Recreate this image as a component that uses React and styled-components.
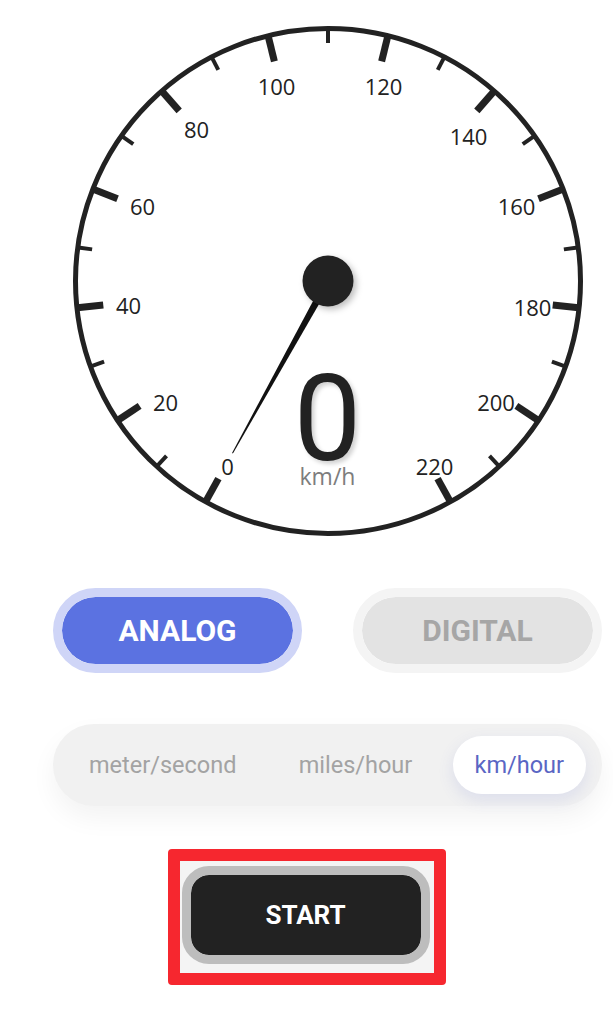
import React, { useState } from 'react';
import styled, { createGlobalStyle } from 'styled-components';

const GlobalStyle = createGlobalStyle`
  html, body {
    margin: 0;
    padding: 0;
    background: #ffffff;
  }
  body {
    width: 613px;
    font-family: Roboto, "Liberation Sans", sans-serif;
  }
`;

const Page = styled.div`
  width: 613px;
  min-height: 1024px;
  box-sizing: border-box;
  padding-top: 26px;
  display: flex;
  flex-direction: column;
  align-items: center;
`;

const Panel = styled.div`
  align-self: flex-start;
  margin-left: 53px;
  width: 549px;
  display: flex;
  flex-direction: column;
  align-items: center;
`;

const Gauge = styled.div`
  position: relative;
  width: 510px;
  height: 510px;
`;

const Dial = styled.svg`
  display: block;
  width: 510px;
  height: 510px;
`;

const Readout = styled.div`
  position: absolute;
  left: 0;
  right: 0;
  top: 343px;
  display: flex;
  flex-direction: column;
  align-items: center;
  pointer-events: none;
`;

const SpeedValue = styled.div`
  font-family: Roboto, "Liberation Sans", sans-serif;
  font-size: 120px;
  line-height: 100px;
  font-weight: 400;
  color: #222222;
  text-shadow: 3px 3px 4px rgba(0, 0, 0, 0.18);
`;

const SpeedUnit = styled.div`
  margin-top: -1px;
  font-family: "Open Sans", "Noto Sans", sans-serif;
  font-size: 23px;
  line-height: 16px;
  color: #7d7d7d;
`;

const ModeRow = styled.div`
  margin-top: 52px;
  width: 100%;
  display: flex;
  justify-content: space-between;
`;

const ModeButton = styled.button`
  width: 249px;
  height: 85px;
  box-sizing: border-box;
  border-radius: 999px;
  border: 9px solid ${(p) => (p.$active ? '#cfd5f7' : '#f4f4f4')};
  background: ${(p) => (p.$active ? '#5b72e1' : '#e3e3e3')};
  background-clip: padding-box;
  color: ${(p) => (p.$active ? '#ffffff' : '#a6a6a6')};
  font-family: Roboto, "Liberation Sans", sans-serif;
  font-weight: 700;
  font-size: 30px;
  padding: 0;
  cursor: pointer;
`;

const UnitBar = styled.div`
  margin-top: 51px;
  width: 100%;
  height: 82px;
  box-sizing: border-box;
  padding: 12px 16px 12px 14px;
  border-radius: 999px;
  background: #f1f1f1;
  box-shadow: 0 12px 26px rgba(0, 0, 0, 0.05);
  display: flex;
  justify-content: space-between;
  align-items: center;
`;

const UnitOption = styled.button`
  height: 58px;
  padding: 0 22px;
  border: none;
  border-radius: 999px;
  background: ${(p) => (p.$active ? '#ffffff' : 'transparent')};
  box-shadow: ${(p) => (p.$active ? '0 6px 16px rgba(80, 95, 200, 0.13)' : 'none')};
  color: ${(p) => (p.$active ? '#5a66c4' : '#a3a3a3')};
  font-family: Roboto, "Liberation Sans", sans-serif;
  font-size: 23.5px;
  font-weight: 400;
  cursor: pointer;
`;

const StartFrame = styled.div`
  margin-top: 43px;
  border: 12px solid #f6272f;
  border-radius: 4px;
  padding: 5px 4px 9px 2px;
  background: #f4f4f4;
  display: flex;
`;

const StartButton = styled.button`
  width: 248px;
  height: 98px;
  box-sizing: border-box;
  border: 9px solid #bdbdbd;
  border-radius: 27px;
  background: #222222;
  background-clip: padding-box;
  color: #ffffff;
  font-family: Roboto, "Liberation Sans", sans-serif;
  font-weight: 700;
  font-size: 26px;
  padding: 0;
  cursor: pointer;
`;

const CX = 255;
const CY = 255;
const START = 29;
const SPAN = 302;
const MAX = 220;

// label centres on the dial face, in dial coordinates
const LABELS = [
  { v: 0, x: 154.5, y: 440 },
  { v: 20, x: 92.5, y: 376 },
  { v: 40, x: 55.5, y: 279 },
  { v: 60, x: 69.5, y: 180 },
  { v: 80, x: 123.5, y: 103 },
  { v: 100, x: 203.5, y: 60 },
  { v: 120, x: 310.5, y: 60 },
  { v: 140, x: 395.5, y: 110 },
  { v: 160, x: 443.5, y: 180 },
  { v: 180, x: 459.5, y: 281 },
  { v: 200, x: 423, y: 376 },
  { v: 220, x: 361.5, y: 440 },
];

const angleFor = (v) => START + (v * SPAN) / MAX;

function Speedometer({ speed }) {
  const ticks = [];
  for (let v = 0; v <= MAX; v += 10) {
    const a = angleFor(v);
    const major = v % 20 === 0;
    const w = major ? 7 : 4;
    const inner = major ? 226 : 238;
    ticks.push(
      <rect
        key={`t${v}`}
        x={-w / 2}
        y={inner}
        width={w}
        height={252 - inner}
        fill="#222"
        transform={`translate(${CX} ${CY}) rotate(${a})`}
      />
    );
  }
  return (
    <Gauge>
      <Dial viewBox="0 0 510 510">
        <defs>
          <filter id="hubShadow" x="-50%" y="-50%" width="200%" height="200%">
            <feDropShadow dx="3" dy="3" stdDeviation="3" floodColor="#000" floodOpacity="0.25" />
          </filter>
        </defs>
        <circle cx={CX} cy={CY} r="252.5" fill="#fff" stroke="#222" strokeWidth="5" />
        {ticks}
        {LABELS.map((l) => (
          <text
            key={`l${l.v}`}
            x={l.x}
            y={l.y}
            textAnchor="middle"
            dominantBaseline="central"
            fontFamily="'Open Sans', 'Noto Sans', sans-serif"
            fontSize="22"
            fill="#222"
          >
            {l.v}
          </text>
        ))}
        <polygon
          points="-3.8,0 3.8,0 0.5,197 -0.5,197"
          fill="#111"
          transform={`translate(${CX} ${CY}) rotate(${angleFor(speed)})`}
        />
        <circle cx={CX} cy={CY} r="25.5" fill="#222" filter="url(#hubShadow)" />
      </Dial>
      <Readout>
        <SpeedValue>{speed}</SpeedValue>
        <SpeedUnit>km/h</SpeedUnit>
      </Readout>
    </Gauge>
  );
}

export default function App() {
  const [mode, setMode] = useState('analog');
  const [unit, setUnit] = useState('kmh');
  const units = [
    { id: 'ms', label: 'meter/second' },
    { id: 'mph', label: 'miles/hour' },
    { id: 'kmh', label: 'km/hour' },
  ];
  return (
    <>
      <GlobalStyle />
      <Page>
        <Panel>
          <Speedometer speed={0} />
          <ModeRow>
            <ModeButton $active={mode === 'analog'} onClick={() => setMode('analog')}>
              ANALOG
            </ModeButton>
            <ModeButton $active={mode === 'digital'} onClick={() => setMode('digital')}>
              DIGITAL
            </ModeButton>
          </ModeRow>
          <UnitBar>
            {units.map((u) => (
              <UnitOption key={u.id} $active={unit === u.id} onClick={() => setUnit(u.id)}>
                {u.label}
              </UnitOption>
            ))}
          </UnitBar>
        </Panel>
        <StartFrame>
          <StartButton>START</StartButton>
        </StartFrame>
      </Page>
    </>
  );
}
